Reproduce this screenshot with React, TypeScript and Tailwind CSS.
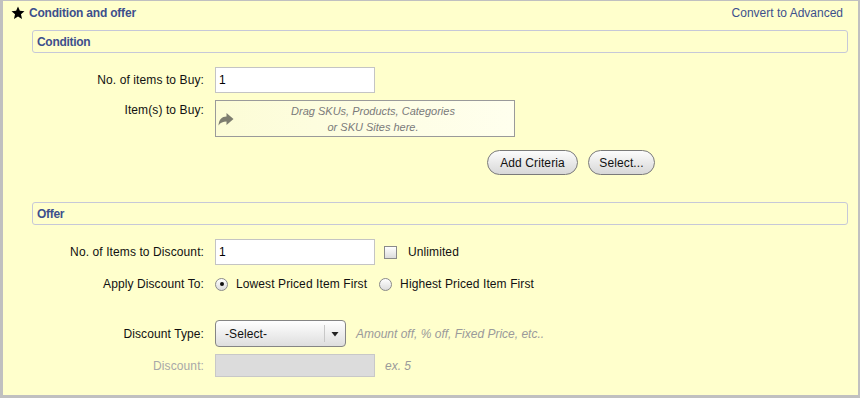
import React from "react";

const Label = ({ children, disabled }: { children: React.ReactNode; disabled?: boolean }) => (
  <div className={`w-[172px] mr-[11px] shrink-0 text-right tracking-[0.1px] ${disabled ? "text-[#a8a8a8]" : "text-[#111]"}`}>{children}</div>
);

const SectionBar = ({ title }: { title: string }) => (
  <div className="h-[23px] border border-[#c6c8d8] rounded-[3px] flex items-center pl-[4px] font-bold text-[#3d4f8c] tracking-[-0.3px]">
    {title}
  </div>
);

const Radio = ({ checked }: { checked?: boolean }) => (
  <span className="w-[13px] h-[13px] rounded-full border border-[#8a8a8a] bg-gradient-to-b from-[#ffffff] to-[#dcdcdc] flex items-center justify-center shrink-0">
    {checked && <span className="w-[4px] h-[4px] rounded-full bg-[#111]" />}
  </span>
);

export default function App() {
  return (
    <div className="w-[860px] h-[398px] bg-[#ffffcc] border-t border-l-[3px] border-r-[2px] border-b-[3px] border-[#c0c0c0] font-['Liberation_Sans',Arial,sans-serif] text-[12px] leading-[14px] overflow-hidden">
      <div className="h-[24px] flex items-center justify-between pl-[8px] pr-[15px]">
        <div className="flex items-center">
          <svg width="14" height="14" viewBox="0 0 24 24" className="mr-[4px]">
            <path d="M12 1l3.2 7.3 7.9.7-6 5.3 1.8 7.9L12 18.1l-6.9 4.1 1.8-7.9-6-5.3 7.9-.7z" fill="#000" />
          </svg>
          <span className="font-bold text-[#3d4f8c] tracking-[-0.2px]">Condition and offer</span>
        </div>
        <span className="text-[#3d4f8c]">Convert to Advanced</span>
      </div>

      <div className="ml-[29px] mr-[10px] mt-[5px]">
        <SectionBar title="Condition" />

        <div className="flex items-center mt-[14px]">
          <Label>No. of items to Buy:</Label>
          <div className="w-[160px] h-[26px] bg-white border border-[#c4c4c4] flex items-center pl-[3px] text-[#000]">1</div>
        </div>

        <div className="flex items-start mt-[7px]">
          <div className="pt-[3px]"><Label>Item(s) to Buy:</Label></div>
          <div className="relative w-[300px] h-[37px] border border-[#9a9a9a] bg-gradient-to-r from-[#fcfcd6] to-[#ffffee] flex flex-col items-center justify-center pl-[16px] italic text-[11px] text-[#7a7a7a] leading-[16px]">
            <svg width="16" height="14" viewBox="0 0 16 14" className="absolute left-[2px] top-[11px]">
              <path d="M0.5 13.5C0.8 7.5 4 4.5 8.5 4.5V1L15.5 7 8.5 13V9.5C5 9.5 2.5 10.5 0.5 13.5Z" fill="#7d7d70" />
            </svg>
            <div>Drag SKUs, Products, Categories</div>
            <div>or SKU Sites here.</div>
          </div>
        </div>

        <div className="flex items-center mt-[13px] ml-[455px] gap-[10px] tracking-[0.1px]">
          <button className="w-[91px] h-[25px] rounded-full border border-[#7a7a7a] bg-gradient-to-b from-[#fcfcfc] to-[#d8d8d8] text-[#111]">Add Criteria</button>
          <button className="w-[67px] h-[25px] rounded-full border border-[#7a7a7a] bg-gradient-to-b from-[#fcfcfc] to-[#d8d8d8] text-[#111]">Select...</button>
        </div>

        <div className="mt-[27px]">
          <SectionBar title="Offer" />
        </div>

        <div className="flex items-center mt-[14px] tracking-[0.1px]">
          <Label>No. of Items to Discount:</Label>
          <div className="w-[160px] h-[26px] bg-white border border-[#c4c4c4] flex items-center pl-[3px] text-[#000]">1</div>
          <span className="ml-[9px] w-[13px] h-[13px] border border-[#8a8a8a] bg-gradient-to-b from-[#ffffff] to-[#dcdcdc]" />
          <span className="ml-[11px] text-[#111]">Unlimited</span>
        </div>

        <div className="flex items-center mt-[9px] h-[20px] tracking-[0.1px]">
          <Label>Apply Discount To:</Label>
          <Radio checked />
          <span className="ml-[8px] text-[#111]">Lowest Priced Item First</span>
          <span className="ml-[12px]"><Radio /></span>
          <span className="ml-[8px] text-[#111]">Highest Priced Item First</span>
        </div>

        <div className="flex items-center mt-[26px]">
          <Label>Discount Type:</Label>
          <div className="w-[131px] h-[27px] rounded-[4px] border border-[#858585] bg-gradient-to-b from-[#ffffff] to-[#dedede] flex items-center">
            <span className="flex-1 pl-[9px] text-[#111] tracking-[0.1px]">-Select-</span>
            <span className="w-px h-[17px] bg-[#c8c8c8]" />
            <svg width="20" height="10" viewBox="0 0 20 10">
              <path d="M6.5 3h7l-3.5 4.5z" fill="#222" />
            </svg>
          </div>
          <span className="ml-[10px] italic text-[#9a9a9a]">Amount off, % off, Fixed Price, etc..</span>
        </div>

        <div className="flex items-center mt-[7px]">
          <Label disabled>Discount:</Label>
          <div className="w-[160px] h-[23px] bg-[#dcdcdc] border border-[#c8c8c8]" />
          <span className="ml-[10px] italic text-[#9a9a9a]">ex. 5</span>
        </div>
      </div>
    </div>
  );
}
